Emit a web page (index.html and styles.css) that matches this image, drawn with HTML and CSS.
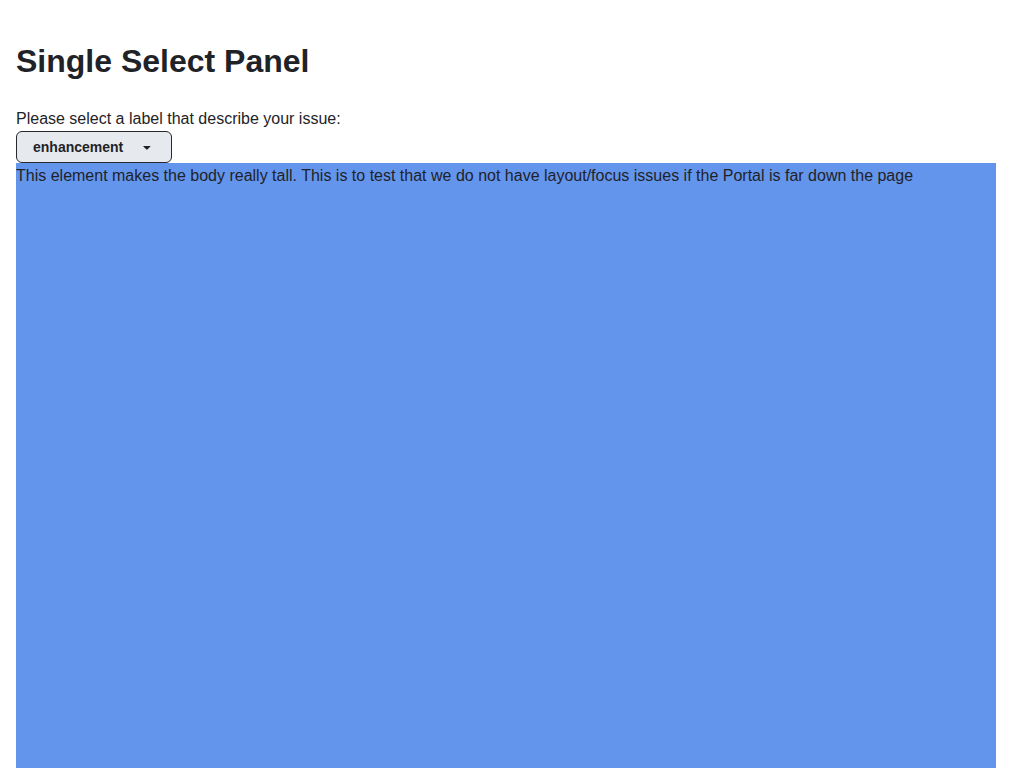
FILE: index.html
```html
<!DOCTYPE html>
<html>
<head>
<meta charset="utf-8">
<link rel="stylesheet" href="styles.css">
</head>
<body>
<main class="page">
  <h1 class="title">Single Select Panel</h1>
  <label class="label">Please select a label that describe your issue:</label>
  <button class="select-btn" type="button">
    <span class="select-text">enhancement</span>
    <svg class="caret" width="16" height="16" viewBox="0 0 16 16"><path d="m4.427 7.427 3.396 3.396a.25.25 0 0 0 .354 0l3.396-3.396A.25.25 0 0 0 11.396 7H4.604a.25.25 0 0 0-.177.427Z" fill="currentColor"/></svg>
  </button>
  <div class="tall">This element makes the body really tall. This is to test that we do not have layout/focus issues if the Portal is far down the page</div>
</main>
</body>
</html>
```

FILE: styles.css
```css
html, body {
  margin: 0;
  padding: 0;
  background: #ffffff;
}
body {
  font-family: "Liberation Sans", Arial, sans-serif;
  color: #1f2328;
}
.page {
  padding: 40px 16px 0;
}
.title {
  margin: 0 0 25px;
  font-size: 32px;
  font-weight: 700;
  line-height: 42px;
}
.label {
  display: block;
  font-size: 16px;
  line-height: 24px;
  margin-bottom: 0;
}
.select-btn {
  display: flex;
  align-items: center;
  gap: 16px;
  height: 32px;
  width: 156px;
  padding: 0 16px;
  box-sizing: border-box;
  border: 1px solid #25292e;
  border-radius: 6px;
  background: #e6eaef;
  color: #1f2328;
  font-family: "Liberation Sans", Arial, sans-serif;
  font-size: 14px;
  font-weight: 700;
  cursor: pointer;
}
.caret {
  display: block;
  color: #1f2328;
}
.tall {
  background: #6495ed;
  height: 2000px;
  font-size: 16px;
  line-height: 26px;
}
```
